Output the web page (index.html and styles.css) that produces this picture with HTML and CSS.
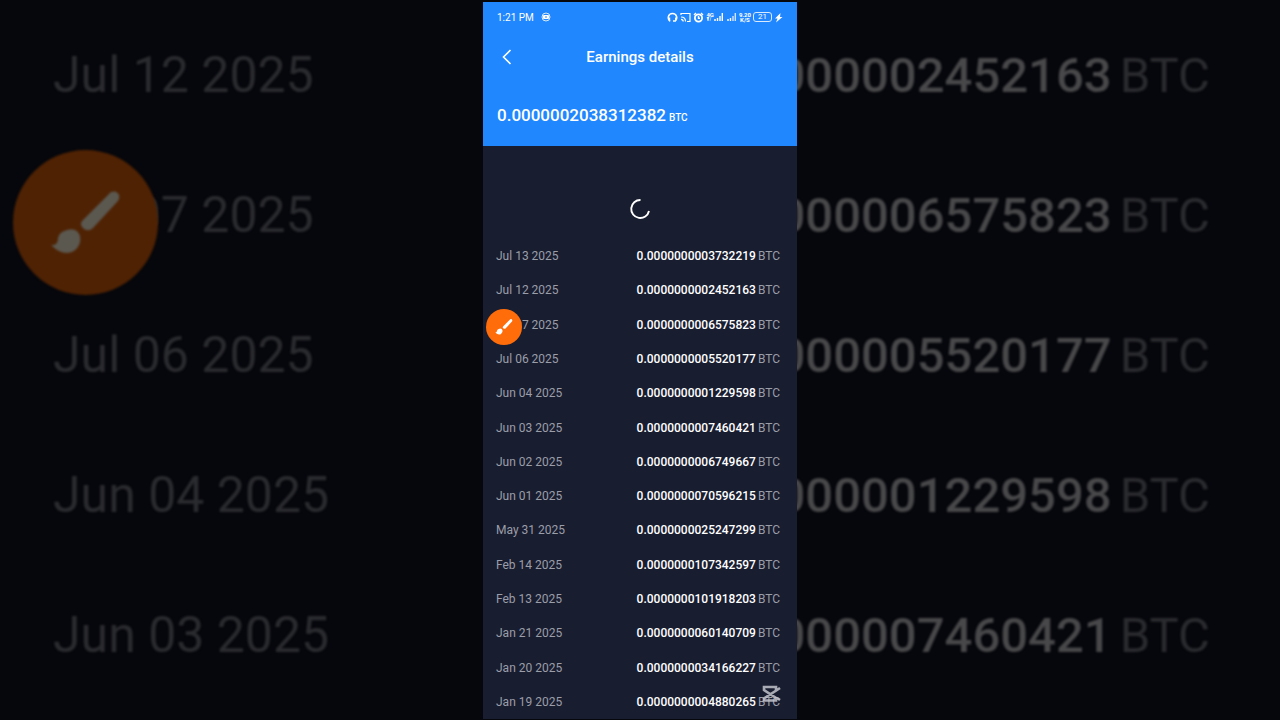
FILE: index.html
```html
<!DOCTYPE html>
<html lang="en">
<head>
<meta charset="utf-8">
<meta name="viewport" content="width=device-width, initial-scale=1">
<title>Earnings details</title>
<link rel="stylesheet" href="styles.css">
</head>
<body>
<svg class="defs" aria-hidden="true">
  <symbol id="brush" viewBox="0 0 72 72">
    <path d="M61 5 Q67 3 69 8 Q70 12 67 15 L43 41 Q39 45 34 42 L32 40 Q29 36 34 32 Z"/>
    <path d="M17 43 Q27 40 30 49 Q32 58 24 64 Q13 70 1 58 Q8 59 8 51 Q9 45 17 43 Z"/>
  </symbol>
</svg>
<div class="stage">
  <div class="backdrop backdrop-left" aria-hidden="true">
    <ul class="big-list">
      <li>Jul 12 2025</li>
      <li>Jul 07 2025</li>
      <li>Jul 06 2025</li>
      <li>Jun 04 2025</li>
      <li>Jun 03 2025</li>
    </ul>
    <span class="big-bubble"><svg class="big-brush"><use href="#brush"/></svg></span>
  </div>

  <main class="phone">
    <header class="top">
      <div class="status">
        <span class="time">1:21 PM</span>
        <svg class="recorder" viewBox="0 0 10 10"><circle cx="5" cy="5" r="4" fill="none" stroke="#d9eaff"/><rect x="2" y="3" width="6" height="4" rx="1" fill="#fff"/><path d="M4 5h2" stroke="#2187ff"/></svg>
        <div class="indicators">
          <svg width="11" height="11" viewBox="0 0 11 11"><path d="M3 9C0 7 1 1.500 5.500 1.500S11 7 8 9H6" fill="none" stroke="#fff" stroke-width="1.500"/><path d="M1 5.500h2.200v4H2zM8 5.500h2.200L9 9.500H8z" fill="#fff"/></svg>
          <svg width="11" height="11" viewBox="0 0 11 11"><path d="M1 3V1.500h9v8H7" fill="none" stroke="#fff" stroke-width="1.200"/><path d="M1 5q4.500 0 4.500 4.500M1 7.300q2.200 0 2.200 2.200" fill="none" stroke="#fff" stroke-width="1.200"/></svg>
          <svg width="11" height="11" viewBox="0 0 11 11"><circle cx="5.500" cy="6" r="3.600" fill="none" stroke="#fff" stroke-width="1.800"/><path d="M1 3l2-2M10 3L8 1M5.500 4v2.300H7" fill="none" stroke="#fff" stroke-width="1.400"/></svg>
          <span class="network"><span class="net-type"><b>4G</b><svg width="6" height="4" viewBox="0 0 6 4"><path d="M1 0h2L2 4zM4 4l1-4" stroke="#fff" fill="#fff" stroke-width=".5"/></svg></span><svg width="9" height="10" viewBox="0 0 9 10"><path d="M1 9V7M3.500 9V6M6 9V4M8.300 9V1" stroke="#fff" stroke-width="1.400"/></svg></span>
          <svg width="9" height="10" viewBox="0 0 9 10"><path d="M1 9V7M3.500 9V6" stroke="#fff" stroke-width="1.400"/><path d="M6 9V4M8.300 9V1" stroke="#cfe4ff" stroke-width="1.400"/></svg>
          <span class="speed"><b>9.20</b><b>K/S</b></span>
          <span class="battery">21</span>
          <svg width="9" height="11" viewBox="0 0 9 11"><path d="M6.500 1L1 6.500h2.500L2 10.500 8.500 5H6z" fill="#fff"/></svg>
        </div>
      </div>
      <div class="title-bar">
        <button class="back" type="button" aria-label="Back"><svg width="10" height="16" viewBox="0 0 10 16"><path d="M8.500 1L1.500 8l7 7" fill="none" stroke="#fff" stroke-width="1.600"/></svg></button>
        <h1>Earnings details</h1>
      </div>
      <p class="total"><strong>0.0000002038312382</strong><small>BTC</small></p>
    </header>

    <div class="loading" role="status" aria-label="Loading">
      <svg width="22" height="22" viewBox="0 0 22 22"><path d="M11.500 2A9 9 0 1 0 20 13" fill="none" stroke="#fff" stroke-width="1.900"/></svg>
    </div>

    <table class="earnings">
      <tbody>
        <tr><td>Jul 13 2025</td><td><strong>0.0000000003732219</strong><span>BTC</span></td></tr>
        <tr><td>Jul 12 2025</td><td><strong>0.0000000002452163</strong><span>BTC</span></td></tr>
        <tr><td class="with-bubble">Jul 07 2025<button class="bubble" type="button" aria-label="Draw"><svg class="brush"><use href="#brush"/></svg></button></td><td><strong>0.0000000006575823</strong><span>BTC</span></td></tr>
        <tr><td>Jul 06 2025</td><td><strong>0.0000000005520177</strong><span>BTC</span></td></tr>
        <tr><td>Jun 04 2025</td><td><strong>0.0000000001229598</strong><span>BTC</span></td></tr>
        <tr><td>Jun 03 2025</td><td><strong>0.0000000007460421</strong><span>BTC</span></td></tr>
        <tr><td>Jun 02 2025</td><td><strong>0.0000000006749667</strong><span>BTC</span></td></tr>
        <tr><td>Jun 01 2025</td><td><strong>0.0000000070596215</strong><span>BTC</span></td></tr>
        <tr><td>May 31 2025</td><td><strong>0.0000000025247299</strong><span>BTC</span></td></tr>
        <tr><td>Feb 14 2025</td><td><strong>0.0000000107342597</strong><span>BTC</span></td></tr>
        <tr><td>Feb 13 2025</td><td><strong>0.0000000101918203</strong><span>BTC</span></td></tr>
        <tr><td>Jan 21 2025</td><td><strong>0.0000000060140709</strong><span>BTC</span></td></tr>
        <tr><td>Jan 20 2025</td><td><strong>0.0000000034166227</strong><span>BTC</span></td></tr>
        <tr><td>Jan 19 2025</td><td><strong>0.0000000004880265</strong><span>BTC</span></td></tr>
      </tbody>
    </table>
    <svg class="watermark" viewBox="0 0 20 18" aria-hidden="true"><path d="M19 3L16 5 3 13.500V15.500H15V13L3 5V2H15V5M16 13l3 2" fill="none" stroke="#c3c4cc" stroke-width="2.600"/></svg>
  </main>

  <div class="backdrop backdrop-right" aria-hidden="true">
    <ul class="big-list">
      <li><strong>000002452163</strong><span>BTC</span></li>
      <li><strong>000006575823</strong><span>BTC</span></li>
      <li><strong>000005520177</strong><span>BTC</span></li>
      <li><strong>000001229598</strong><span>BTC</span></li>
      <li><strong>000007460421</strong><span>BTC</span></li>
    </ul>
  </div>
</div>
</body>
</html>
```
FILE: styles.css
```css
* {
  box-sizing: border-box;
}

body {
  margin: 0;
  background: #06070c;
  font-family: Roboto, "Liberation Sans", sans-serif;
}

button {
  border: 0;
  padding: 0;
  font: inherit;
}

.defs {
  position: absolute;
  width: 0;
  height: 0;
}

.stage {
  display: grid;
  grid-template-columns: 1fr minmax(314px, 24%) 1fr;
  height: 100vh;
  min-height: 600px;
  overflow: hidden;
}

/* Enlarged, dimmed copy of the list on both sides */
.backdrop {
  position: relative;
  min-width: 0;
  color: #2a2b2f;
  font-size: 49px;
}

.backdrop-left {
  font-size: 50px;
}

.big-list {
  display: grid;
  grid-template-columns: 100%;
  grid-auto-rows: 140px;
  margin: 0;
  padding: 5px 0 0;
  list-style: none;
  filter: blur(1px);
}

.big-list li {
  display: flex;
  align-items: center;
  white-space: nowrap;
}

.backdrop-left li {
  padding-left: 53px;
}

.backdrop-right li {
  justify-content: flex-end;
  gap: 8px;
  padding-right: 70px;
}

.big-list strong {
  color: #48484a;
  font-weight: 500;
}

.big-bubble {
  position: absolute;
  top: 150px;
  left: 13px;
  display: flex;
  align-items: center;
  justify-content: center;
  width: 145px;
  height: 145px;
  border-radius: 50%;
  background: #4f2203;
  filter: blur(1px);
}

.big-brush {
  width: 72px;
  height: 72px;
  fill: #5b5850;
}

/* Phone screen */
.phone {
  position: relative;
  z-index: 1;
  display: flex;
  flex-direction: column;
  min-width: 0;
  border-top: 2px solid #05070d;
  border-bottom: 1px solid #05070d;
  background: #191d30;
  color: #fff;
}

.top {
  background: #2187ff;
  padding: 5px 14px 16px;
}

.status {
  display: flex;
  align-items: center;
  gap: 7px;
  height: 20px;
  font-size: 10px;
}

.recorder {
  width: 10px;
  height: 10px;
}

.indicators {
  display: flex;
  align-items: center;
  gap: 2px;
  margin-left: auto;
}

.indicators b {
  display: block;
  font-size: 6px;
  line-height: 5px;
  font-weight: 700;
}

.network {
  display: flex;
  margin-right: 2px;
}

.net-type svg {
  display: block;
}

.speed {
  margin-left: 1px;
  text-align: center;
}

.battery {
  width: 19px;
  height: 10px;
  border: 1px solid #d9eaff;
  border-radius: 3px;
  font-size: 8px;
  line-height: 8px;
  text-align: center;
}

.title-bar {
  display: grid;
  grid-template-columns: 20px 1fr 20px;
  align-items: center;
  height: 60px;
}

.back {
  display: flex;
  align-items: center;
  justify-content: center;
  height: 24px;
  background: none;
}

h1 {
  margin: 0;
  font-size: 15px;
  font-weight: 500;
  text-align: center;
}

.total {
  display: flex;
  align-items: baseline;
  gap: 3px;
  margin: 16px 0 0;
  font-size: 17px;
  line-height: 24px;
}

.total strong,
.total small {
  font-weight: 500;
}

.total small {
  font-size: 10px;
}

.loading {
  display: flex;
  justify-content: center;
  height: 93px;
  padding-top: 52px;
}

.earnings {
  flex: 1;
  width: 100%;
  border-collapse: collapse;
  color: #9b9da8;
  font-size: 12px;
  line-height: 16px;
}

.earnings td {
  padding: 0 0 0 13px;
  white-space: nowrap;
}

.earnings td:last-child {
  padding: 0 17px 0 0;
  text-align: right;
}

.earnings strong {
  margin-right: 2px;
  color: #fff;
  font-weight: 500;
}

.with-bubble {
  position: relative;
}

.bubble {
  position: absolute;
  top: 1px;
  left: 3px;
  display: flex;
  align-items: center;
  justify-content: center;
  width: 36px;
  height: 36px;
  border-radius: 50%;
  background: #ff6d0a;
}

.brush {
  width: 18px;
  height: 18px;
  fill: #fff;
}

.watermark {
  position: absolute;
  right: 16px;
  bottom: 16px;
  width: 20px;
  height: 18px;
  opacity: 0.85;
}
```
